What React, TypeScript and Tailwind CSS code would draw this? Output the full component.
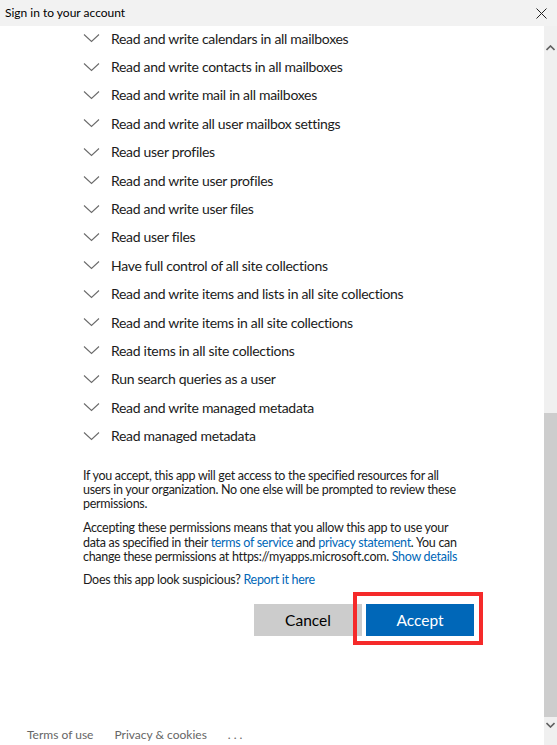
import { useState } from "react";

const perms = [
  "Read and write calendars in all mailboxes",
  "Read and write contacts in all mailboxes",
  "Read and write mail in all mailboxes",
  "Read and write all user mailbox settings",
  "Read user profiles",
  "Read and write user profiles",
  "Read and write user files",
  "Read user files",
  "Have full control of all site collections",
  "Read and write items and lists in all site collections",
  "Read and write items in all site collections",
  "Read items in all site collections",
  "Run search queries as a user",
  "Read and write managed metadata",
  "Read managed metadata",
];

function Chevron() {
  return (
    <svg width="17" height="10" viewBox="0 0 17 10" className="shrink-0">
      <path d="M1 1.5 L8.5 8.5 L16 1.5" fill="none" stroke="#6b6b6b" strokeWidth="1.1" />
    </svg>
  );
}

export default function App() {
  const [open, setOpen] = useState<number | null>(null);

  return (
    <div
      className="w-[557px] h-[745px] flex flex-col bg-white overflow-hidden text-[#1b1b1b]"
      style={{ fontFamily: "Lato, 'Open Sans', sans-serif" }}
    >
      {/* window title bar */}
      <div className="h-[26px] bg-[#f2f2f2] flex items-center justify-between pl-[5px] pr-[10px] shrink-0 relative z-10">
        <span className="text-[12px] text-black">Sign in to your account</span>
        <svg width="11" height="11" viewBox="0 0 11 11">
          <path d="M0.5 0.5 L10.5 10.5 M10.5 0.5 L0.5 10.5" stroke="#222" strokeWidth="1" />
        </svg>
      </div>

      <div className="flex flex-1 min-h-0">
        <div className="flex-1 flex flex-col pl-[83px]">
          {/* permissions */}
          <ul className="-mt-[2px]">
            {perms.map((p, i) => (
              <li
                key={p}
                onClick={() => setOpen(open === i ? null : i)}
                className="h-[28.4px] flex items-center gap-[11px] cursor-pointer"
              >
                <Chevron />
                <span className="text-[14px] tracking-[-0.3px]">{p}</span>
              </li>
            ))}
          </ul>

          {/* disclaimer */}
          <div className="w-[420px] mt-[19px] text-[12.5px] leading-[14.2px] tracking-[-0.3px]">
            <p>
              If you accept, this app will get access to the specified resources for all
              <br />
              users in your organization. No one else will be prompted to review these
              <br />
              permissions.
            </p>
            <p className="mt-[10px]">
              Accepting these permissions means that you allow this app to use your
              <br />
              data as specified in their <a className="text-[#0067b8]">terms of service</a> and{" "}
              <a className="text-[#0067b8]">privacy statement</a>. You can
              <br />
              change these permissions at https://myapps.microsoft.com.{" "}
              <a className="text-[#0067b8]">Show details</a>
            </p>
            <p className="mt-[9px]">
              Does this app look suspicious? <a className="text-[#0067b8]">Report it here</a>
            </p>
          </div>

          {/* actions */}
          <div className="w-[391px] flex justify-end gap-[4px] mt-[17px]">
            <button className="w-[108px] h-[32px] bg-[#cccccc] text-[15.5px] text-black">Cancel</button>
            <div className="relative">
              <button className="w-[108px] h-[32px] bg-[#0067b8] text-[15.5px] text-white">Accept</button>
              <div className="absolute -left-[13px] -top-[12px] w-[130px] h-[53px] border-[4px] border-[#f52a2a] pointer-events-none" />
            </div>
          </div>

          {/* footer */}
          <div className="mt-auto mb-[1px] -ml-[56px] flex items-center text-[12px] text-[#666666]">
            <span>Terms of use</span>
            <span className="ml-[21px]">Privacy &amp; cookies</span>
            <span className="ml-[21px] tracking-[3px]">...</span>
          </div>
        </div>

        {/* scrollbar */}
        <div className="w-[13px] bg-[#f0f0f0] flex flex-col items-center shrink-0">
          <svg width="9" height="6" viewBox="0 0 9 6" className="mt-[19px]">
            <path d="M0.5 5 L4.5 1 L8.5 5" fill="none" stroke="#606060" strokeWidth="1.6" />
          </svg>
          <div className="flex-1" />
          <div className="w-full h-[304px] bg-[#cdcdcd]" />
          <svg width="9" height="6" viewBox="0 0 9 6" className="mt-[5px] mb-[17px]">
            <path d="M0.5 1 L4.5 5 L8.5 1" fill="none" stroke="#606060" strokeWidth="1.6" />
          </svg>
        </div>
      </div>
    </div>
  );
}
